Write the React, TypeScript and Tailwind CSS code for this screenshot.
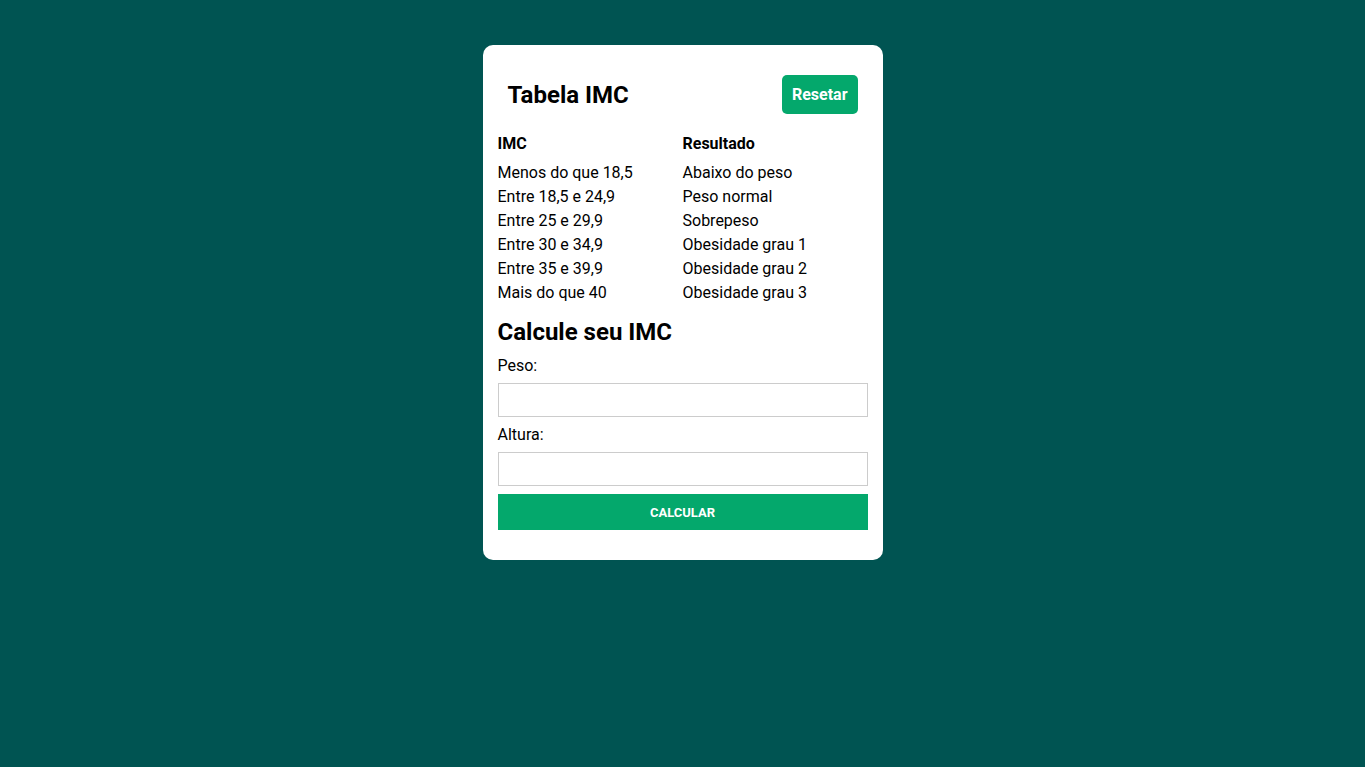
const rows = [
  ["Menos do que 18,5", "Abaixo do peso"],
  ["Entre 18,5 e 24,9", "Peso normal"],
  ["Entre 25 e 29,9", "Sobrepeso"],
  ["Entre 30 e 34,9", "Obesidade grau 1"],
  ["Entre 35 e 39,9", "Obesidade grau 2"],
  ["Mais do que 40", "Obesidade grau 3"],
];

export default function App() {
  return (
    <div className="min-h-screen bg-[#005452] flex justify-center pt-[45px] font-['Roboto',sans-serif] text-black">
      <div className="w-[400px] h-fit bg-white rounded-[10px] px-[15px] pt-[20px] pb-[30px]">
        <div className="flex items-center justify-between p-[10px]">
          <h1 className="text-[24px] font-bold leading-[28px]">Tabela IMC</h1>
          <button className="bg-[#04a86c] text-white font-bold text-[16px] leading-[19px] px-[10px] py-[10px] rounded-[5px]">
            Resetar
          </button>
        </div>
        <div className="grid grid-cols-2 mt-[8px] text-[16px] leading-[24px]">
          <div className="font-bold mb-[5px]">IMC</div>
          <div className="font-bold mb-[5px]">Resultado</div>
          {rows.map(([imc, res]) => (
            <>
              <div key={imc}>{imc}</div>
              <div key={res}>{res}</div>
            </>
          ))}
        </div>
        <h2 className="text-[24px] font-bold leading-[28px] mt-[13px]">Calcule seu IMC</h2>
        <div className="mt-[8px] text-[16px] leading-[24px]">Peso:</div>
        <input className="block w-full h-[34px] border border-[#cccccc] mt-[5px] outline-none" />
        <div className="mt-[6px] text-[16px] leading-[24px]">Altura:</div>
        <input className="block w-full h-[34px] border border-[#cccccc] mt-[5px] outline-none" />
        <button className="block w-full h-[36px] mt-[8px] pt-[2px] bg-[#04a86c] text-white uppercase font-bold text-[13px]">
          Calcular
        </button>
      </div>
    </div>
  );
}
